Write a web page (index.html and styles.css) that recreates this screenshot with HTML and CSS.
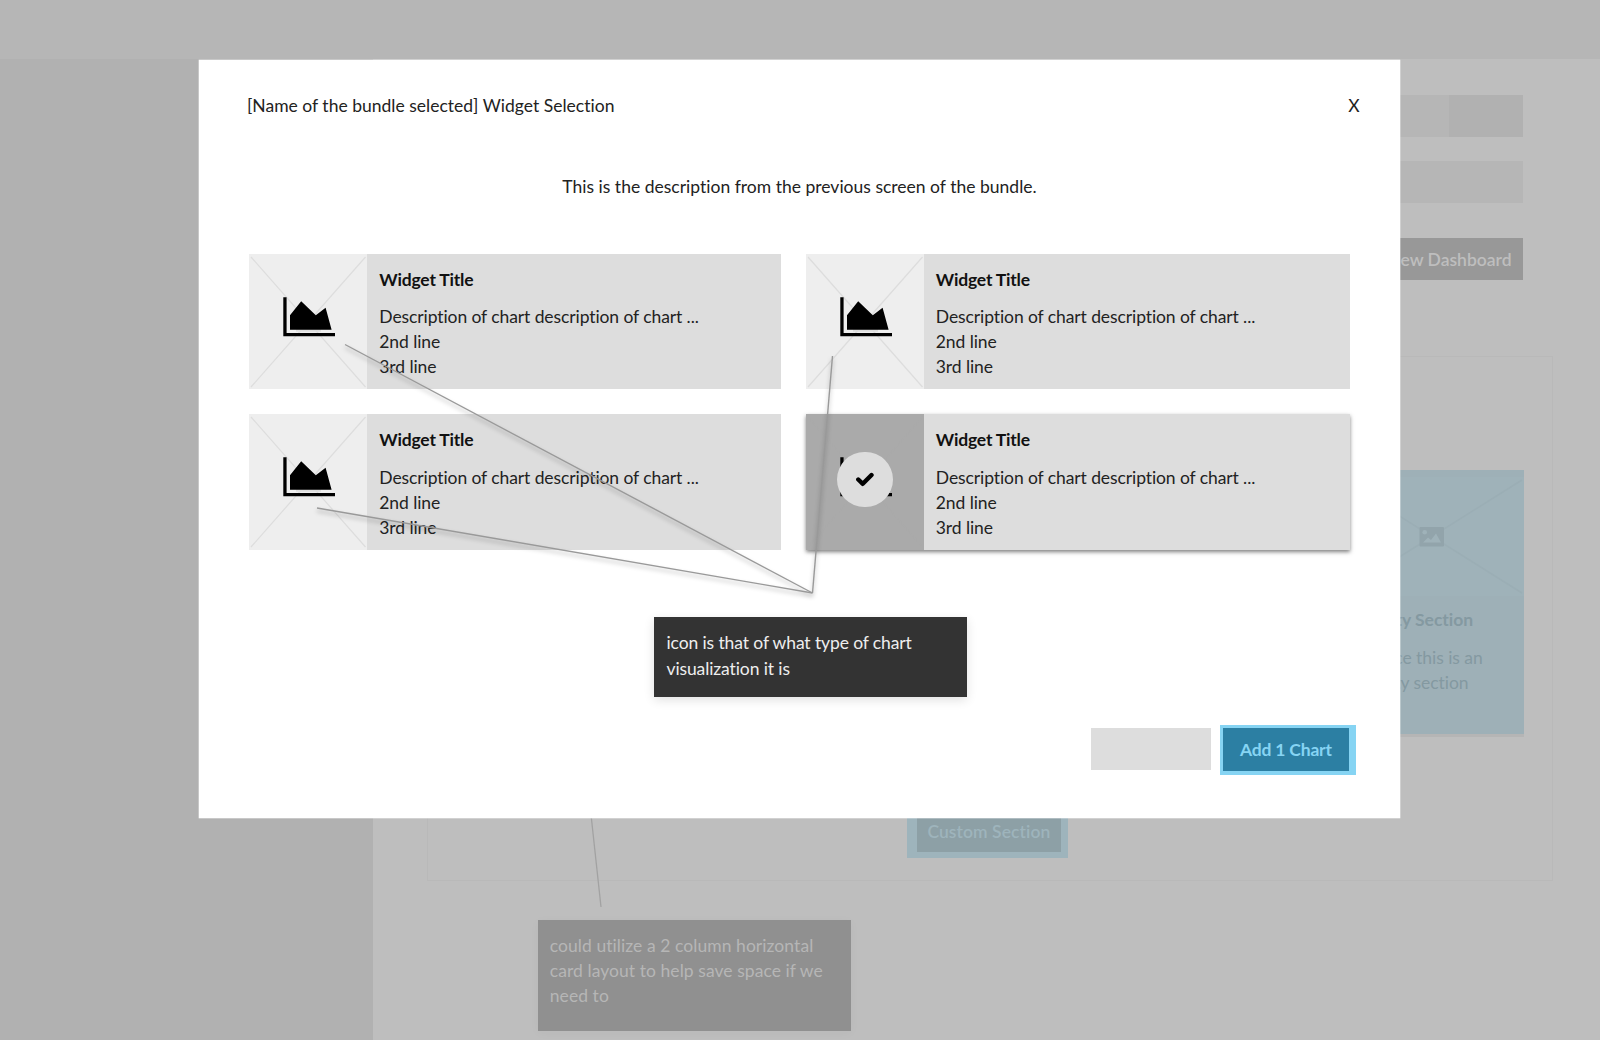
FILE: index.html
```html
<!DOCTYPE html>
<html lang="en">
<head>
<meta charset="utf-8">
<title>Widget Selection</title>
<link rel="stylesheet" href="styles.css">
</head>
<body>
<svg class="defs" width="0" height="0" aria-hidden="true">
  <symbol id="thumb" viewBox="0 0 118 135.3">
    <path class="cross" d="M2 3 116.5 133M116.5 3 2 133"/>
    <path class="smudge" d="M47 75h25v2.700H47z"/>
    <path d="M34.3 43.3h3.3v35.7H86v3.3H34.3zM41 61.3 52.2 47.3 66.8 61.3 76.6 53.7 82.6 75.7H41z"/>
  </symbol>
</svg>
<div class="app">
  <div class="topbar"></div>
  <div class="body">
    <aside class="sidebar"></aside>
    <main class="main">
      <div class="controls">
        <div class="search"><div class="search-action"></div></div>
        <div class="select"></div>
        <div class="dash-button">New Dashboard</div>
      </div>
      <section class="panel">
        <article class="section-card">
          <svg class="section-image" viewBox="0 0 184 119" width="184" height="119">
            <path class="section-cross" d="M2 3 182 116M182 3 2 116"/>
            <rect class="section-icon" x="79.5" y="50" width="24.5" height="19.5" rx="1"/>
            <circle class="section-glyph" cx="84.7" cy="55.3" r="2.3"/>
            <path class="section-glyph" d="M83 65.500l5-5 3 2.500 5-6.500 5 9z"/>
          </svg>
          <div class="section-body">
            <h3 class="section-title">Empty Section</h3>
            <p class="section-text">Notice this is an<br>empty section</p>
          </div>
        </article>
        <div class="custom-button"><span class="custom-label">Custom Section</span></div>
      </section>
      <div class="note note-dim">could utilize a 2 column horizontal<br>card layout to help save space if we<br>need to</div>
    </main>
  </div>
  <svg class="pointer" width="1600" height="1040" viewBox="0 0 1600 1040">
    <path class="pointer-dim" d="M590.500 810 601 907"/>
  </svg>
</div>

<div class="modal">
  <header class="modal-header">
    <span class="modal-title">[Name of the bundle selected] Widget Selection</span>
    <span class="close">X</span>
  </header>
  <p class="intro">This is the description from the previous screen of the bundle.</p>
  <div class="cards">
    <article class="card">
      <svg class="thumb"><use href="#thumb"/></svg>
      <div class="card-body"><h2 class="card-title">Widget Title</h2><p class="card-text">Description of chart description of chart ...<br>2nd line<br>3rd line</p></div>
    </article>
    <article class="card">
      <svg class="thumb"><use href="#thumb"/></svg>
      <div class="card-body"><h2 class="card-title">Widget Title</h2><p class="card-text">Description of chart description of chart ...<br>2nd line<br>3rd line</p></div>
    </article>
    <article class="card">
      <svg class="thumb"><use href="#thumb"/></svg>
      <div class="card-body"><h2 class="card-title">Widget Title</h2><p class="card-text">Description of chart description of chart ...<br>2nd line<br>3rd line</p></div>
    </article>
    <article class="card selected">
      <svg class="thumb"><use href="#thumb"/></svg>
      <div class="card-body"><h2 class="card-title">Widget Title</h2><p class="card-text">Description of chart description of chart ...<br>2nd line<br>3rd line</p></div>
      <div class="badge"><svg width="18" height="15" viewBox="0 0 18 15"><path class="tick" d="M2.300 7.500 6.800 11.800 15.500 3"/></svg></div>
    </article>
  </div>
  <div class="note">icon is that of what type of chart<br>visualization it is</div>
  <footer class="footer">
    <div class="cancel"></div>
    <div class="add-focus"><div class="add">Add 1 Chart</div></div>
  </footer>
</div>
<svg class="pointer" width="1600" height="1040" viewBox="0 0 1600 1040">
  <g class="pointer-lines"><path d="M345 344.500 812.500 593"/><path d="M317 508 812.500 593"/><path d="M832.500 356 812.500 593"/></g>
</svg>
</body>
</html>
```
FILE: styles.css
```css
* { box-sizing: border-box; }
body {
  margin: 0;
  width: 1600px;
  height: 1040px;
  position: relative;
  overflow: hidden;
  background: #bebebe;
  color: #222;
  font: 17.5px/25px Lato, "Open Sans", sans-serif;
  font-variant-ligatures: none;
}
h2, h3, p { margin: 0; font-size: inherit; font-weight: inherit; }
.defs { position: absolute; }

.app { display: flex; flex-direction: column; height: 1040px; }
.topbar { flex: none; height: 59.300px; background: #b6b6b6; }
.body { flex: 1; display: flex; min-height: 0; }
.sidebar { flex: none; width: 373.300px; background: #b1b1b1; }
.main { flex: 1; min-width: 0; }

.controls {
  display: flex;
  flex-direction: column;
  align-items: flex-end;
  padding: 35.700px 77.400px 0 0;
}
.search { width: 300px; height: 42px; display: flex; justify-content: flex-end; background: #b6b6b6; }
.search-action { width: 73.500px; background: #b1b1b1; }
.select { width: 300px; height: 42.300px; margin-top: 24px; background: #b6b6b6; }
.dash-button {
  height: 42.300px;
  margin-top: 34.500px;
  padding: 9.300px 11px;
  background: #989898;
  color: #bebebe;
  font-weight: 600;
}

.panel {
  display: flex;
  flex-direction: column;
  width: 1126px;
  height: 525.500px;
  margin: 75.700px 0 0 53.300px;
  border: 1px solid #b9b9b9;
}
.section-card {
  align-self: flex-end;
  width: 184px;
  height: 264.500px;
  margin: 113.100px 27.500px 0 0;
  padding-top: 7px;
  background: #9eb0b7;
  box-shadow: 0 3px 0 #b5b5b5;
}
.section-image { display: block; background: #9fb2b9; }
.section-cross { fill: none; stroke: #9baeb5; stroke-width: 1.500; }
.section-icon { fill: #92a4ab; }
.section-glyph { fill: #9fb2b9; }
.section-body { padding: 11px 0 0 21px; color: #8499a1; }
.section-title { font-weight: 700; }
.section-text { margin-top: 13px; letter-spacing: -.04px; }
.custom-button {
  width: 160.500px;
  height: 60px;
  margin: 64px 0 0 479.800px;
  padding: 6.500px 7px 6.500px 10px;
  background: #9eb4bc;
}
.custom-label { display: block; height: 47px; padding: 14px 10px; background: #8da0a6; color: #9eb4bc; font-weight: 600; letter-spacing: .08px; white-space: nowrap; }

.note {
  width: 313px;
  height: 80px;
  padding: 13px 12.500px;
  background: #333;
  color: #eee;
  line-height: 25.400px;
  letter-spacing: -.11px;
  box-shadow: 0 3px 10px rgba(0, 0, 0, .12);
}
.note-dim {
  height: 111px;
  padding-left: 12px;
  margin: 39px 0 0 164.500px;
  background: #909090;
  color: #b6b6b6;
  line-height: 25px;
  letter-spacing: .06px;
  box-shadow: 0 2px 10px rgba(0, 0, 0, .03);
}

.modal {
  position: absolute;
  left: 199px;
  top: 60px;
  width: 1201px;
  height: 758px;
  background: #fff;
  box-shadow: 0 0 0 .3px #fff;
}
.modal-header { display: flex; justify-content: space-between; padding: 33.400px 40.300px 0 48px; }
.modal-title { letter-spacing: .01px; }
.intro { margin-top: 55.900px; text-align: center; letter-spacing: .01px; }
.cards {
  display: grid;
  grid-template-columns: 531.500px 544.500px;
  grid-template-rows: 135.300px 135.300px;
  gap: 25px 25px;
  margin: 54.700px 0 0 50px;
}
.card { position: relative; display: flex; background: #ddd; }
.thumb { --cross: #ddd; flex: none; width: 118px; height: 135.300px; background: #eee; }
.cross { fill: none; stroke: var(--cross); stroke-width: 1.200; }
.smudge { fill: var(--cross); }
.card-body { padding: 13.200px 0 0 12.300px; }
.card-title { font-weight: 700; color: #111; letter-spacing: -.18px; }
.card-text { margin-top: 12.300px; letter-spacing: -.09px; }
.selected { box-shadow: 0 2px 4px rgba(0, 0, 0, .5); }
.selected .thumb { --cross: #aaa; background: #aaa; }
.badge {
  position: absolute;
  left: 31.500px;
  top: 37.500px;
  display: flex;
  align-items: center;
  justify-content: center;
  width: 55.500px;
  height: 55.500px;
  border-radius: 50%;
  background: #ddd;
}
.tick { fill: none; stroke: #000; stroke-width: 4.400; stroke-linejoin: round; stroke-linecap: round; }
.modal .note { margin: 67.700px 0 0 455px; }
.footer { display: flex; justify-content: flex-end; gap: 8.700px; margin: 28.200px 44.200px 0 0; }
.cancel { width: 120.300px; height: 42.500px; margin-top: 2.500px; background: #ddd; }
.add-focus { width: 136.300px; height: 50px; padding: 2.500px 7px 4.700px 3.500px; background: #86d4f3; }
.add { height: 42.800px; padding-top: 9.300px; background: #2c7fa3; color: #86d4f3; font-weight: 700; text-align: center; letter-spacing: -.2px; }

.pointer { position: absolute; left: 0; top: 0; pointer-events: none; }
.pointer-dim { stroke: #a2a2a2; stroke-width: 1.300; }
.pointer-lines { fill: none; stroke: #999; stroke-width: 1.400; filter: drop-shadow(0 3px 2px rgba(0, 0, 0, .3)); }
```
